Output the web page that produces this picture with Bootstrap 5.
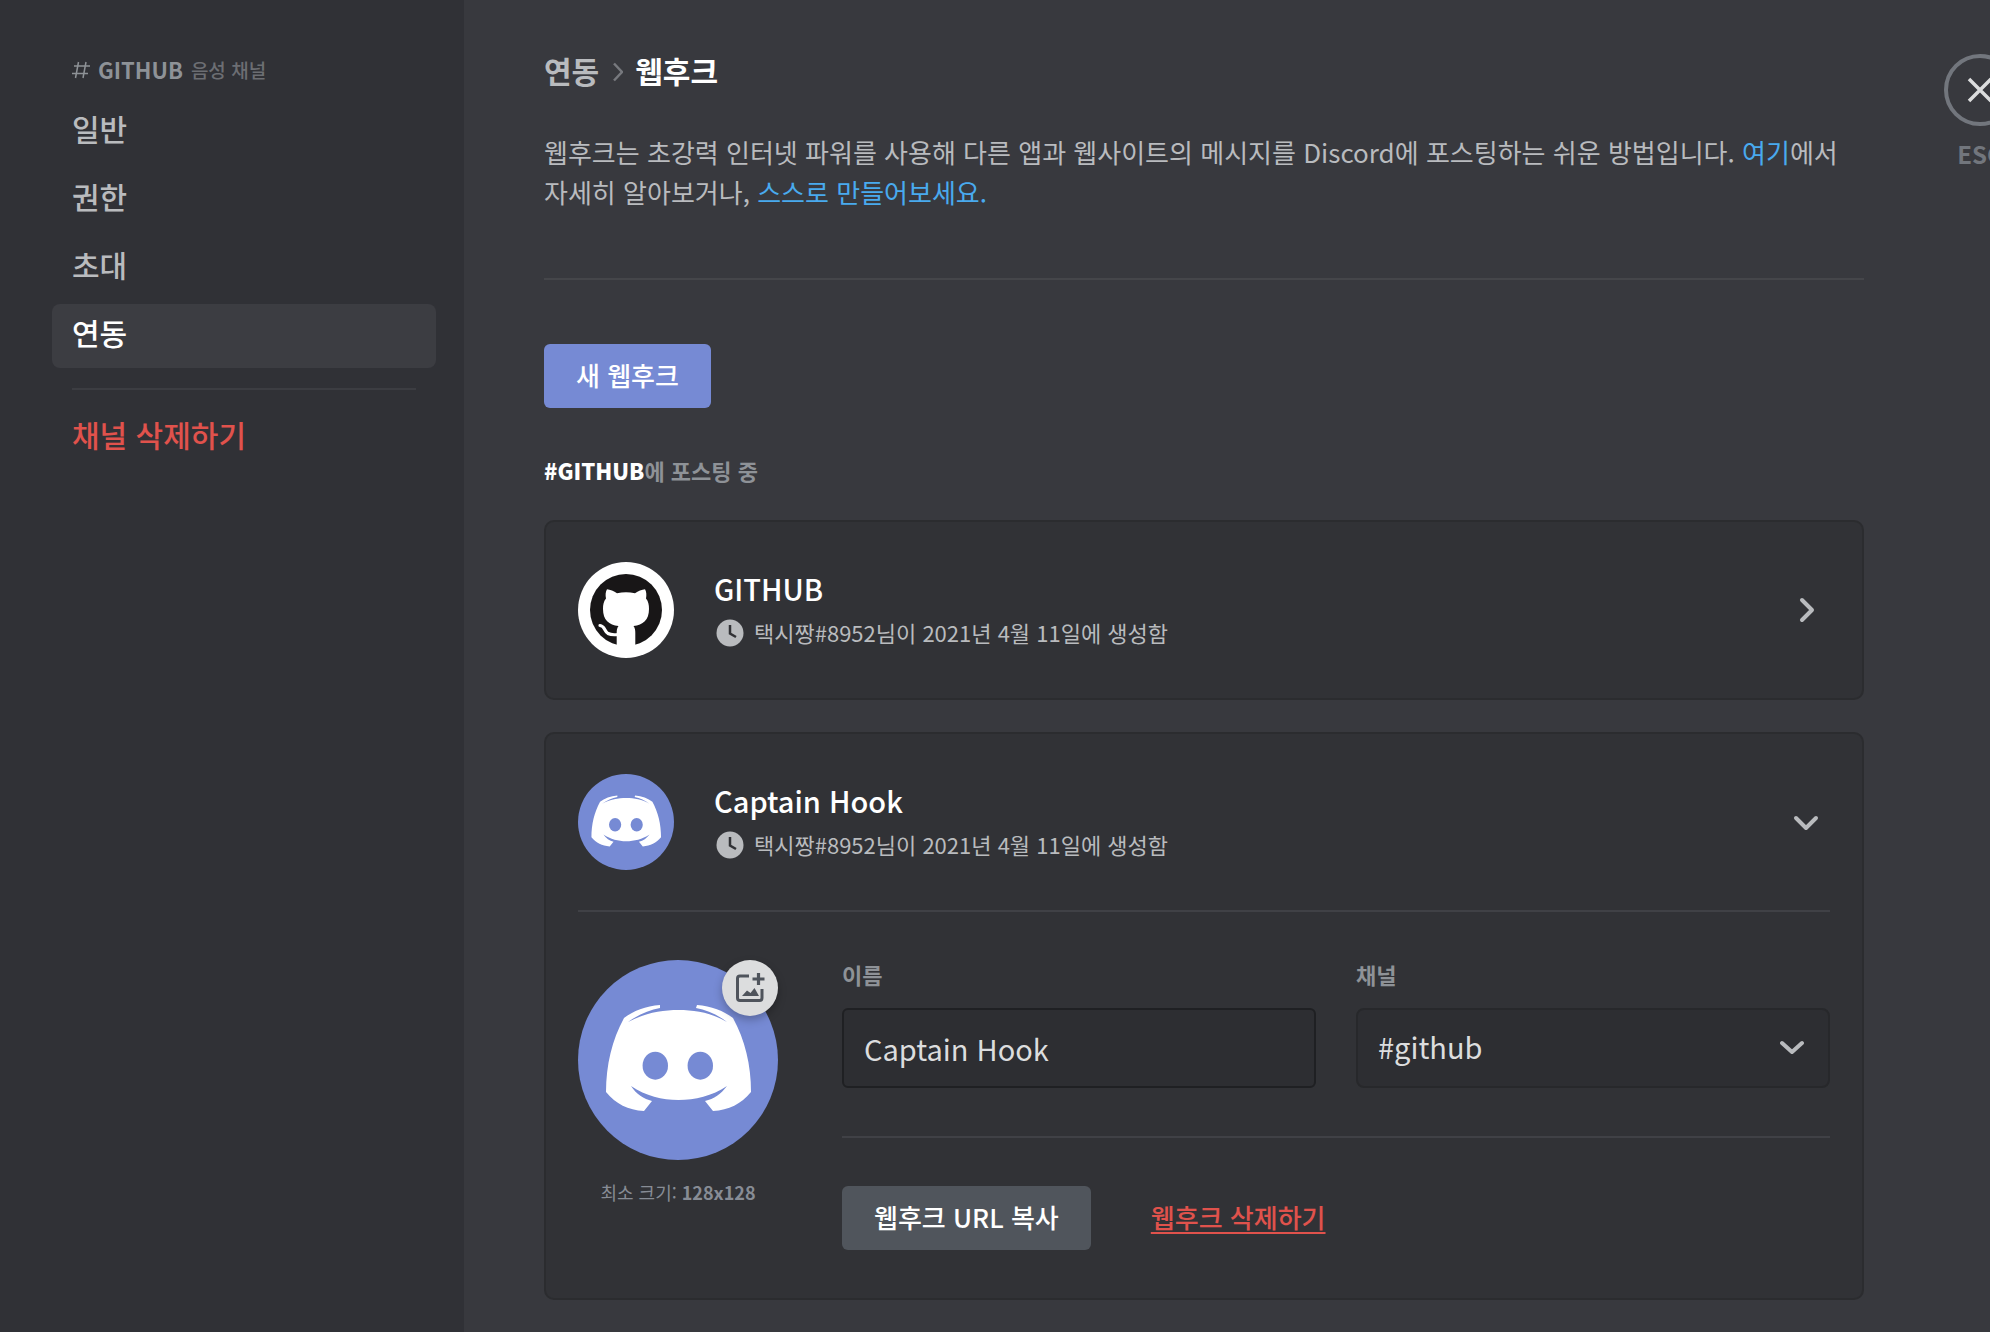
<!DOCTYPE html>
<html lang="ko">
<head>
<meta charset="utf-8">
<meta name="viewport" content="width=device-width, initial-scale=1">
<title>웹후크</title>
<link href="https://cdn.jsdelivr.net/npm/bootstrap@5.3.0/dist/css/bootstrap.min.css" rel="stylesheet">
<style>
:root { --side: #303136; --main: #38393e; --panel: #313236; --rule: #404146; --soft: #b9bbbe; --muted: #8e9297; --danger: #e0524c; }
body { background: var(--main); color: var(--soft); font-family: "Noto Sans CJK KR", "Noto Sans", sans-serif; font-size: 26px; line-height: 40px; overflow-x: hidden; }
button, input, select { font-family: inherit; }
.rule { height: 2px; margin: 0; border: 0; opacity: 1; background: var(--rule); }
.fw-mid { font-weight: 500; }

.side { width: 464px; background: var(--side); padding: 50px 28px 0 52px; }
.side-head { font-size: 22px; line-height: 40px; padding: 0 20px; margin-bottom: 10px; color: var(--muted); }
.side-head b { line-height: 38px; padding-bottom: 2px; }
.side-kind { font-size: 19px; color: #6c6e73; }
.side .nav { gap: 4px; }
.side .nav-link { height: 64px; padding: 8px 20px; line-height: 40px; font-size: 30px; font-weight: 500; color: var(--soft); border-radius: 8px; }
.side .nav-link.active { background: #3c3d42; color: #fff; }
.side .nav-link.gone { color: var(--danger); }
.side .rule { margin: 20px 20px 16px; background: #3c3d42; }

.settings { padding: 50px 0 32px 80px; gap: 80px; }
.trail { font-size: 30px; line-height: 40px; font-weight: 700; gap: 12px; margin: 0 0 42px; }
.trail a { color: var(--soft); }
.trail svg { margin: 4px 0 0 2px; }
.about a { color: #49aaee; text-decoration: none; }
.about { margin-bottom: 66px; }
.about + .rule { background: #45464a; }
.btn-tall { height: 64px; padding: 0 32px; border: 0; border-radius: 6px; font-size: 26px; line-height: 60px; font-weight: 500; color: #fff; }
.btn-tall span { display: block; padding-bottom: 2px; }
.btn-blurple { background: #768ad4; }
.btn-slate { background: #50555c; }
.posting { font-size: 22px; line-height: 32px; font-weight: 700; color: var(--muted); margin: 46px 0 34px; }

.hook { background: var(--panel); border: 2px solid #2b2c2f; border-radius: 10px; padding: 40px 32px; }
.hook + .hook { margin-top: 32px; }
.hook-top { gap: 40px; }
.hook-rule { margin-top: 40px; }
.hook h2 { font-size: 29px; line-height: 44px; font-weight: 500; color: #fff; margin: 0; }
.made { font-size: 22px; line-height: 44px; gap: 10px; }
.made svg { margin: 2px 0 0 2px; }
.fold { width: 48px; height: 48px; padding: 0; border: 0; background: none; color: var(--soft); }
.hook-body { gap: 64px; padding: 48px 0 8px; }
.picker { width: 200px; }
.pick-btn { width: 56px; height: 56px; padding: 0; border: 0; border-radius: 50%; background: #dcddde; color: #4f545c; box-shadow: 0 4px 8px rgba(0,0,0,.25); }
.hint { font-size: 18px; line-height: 32px; margin-top: 16px; color: #878c95; }
.fields { gap: 40px; }
.fields label { font-size: 22px; line-height: 28px; font-weight: 700; color: var(--muted); margin-bottom: 20px; }
.fields .form-control, .fields .form-select { height: 80px; padding: 0 20px; font-size: 29px; color: #dcddde; background: #2d2e32; border: 2px solid #1f2023; border-radius: 6px; }
.fields .form-control { line-height: 76px; }
.fields .form-select { line-height: 44px; padding-bottom: 4px; border-color: #27282b; border-radius: 8px; }
.caret { right: 26px; top: 28px; color: var(--soft); pointer-events: none; }
.remove { margin-left: 60px; padding-bottom: 2px; color: var(--danger); font-weight: 500; text-underline-offset: 4px; text-decoration-thickness: 2px; }
.remove:hover { color: var(--danger); }
.close-col { width: 46px; }
.close-btn { width: 72px; padding: 0; border: 0; background: none; color: #72767d; margin-top: 4px; font-size: 24px; line-height: 32px; font-weight: 700; }
.close-btn svg { margin-bottom: 12px; }
</style>
<script src="https://cdn.jsdelivr.net/npm/bootstrap@5.3.0/dist/js/bootstrap.bundle.min.js" defer></script>
</head>
<body>
<svg class="d-none" aria-hidden="true">
  <symbol id="clyde" viewBox="0 0 200 200">
    <circle cx="100" cy="100" r="100" fill="#768ad4"/>
    <path fill="#fff" d="M82 45C68 46 55 51 46 58C34 80 28 105 28 132C38 144 50 150 66 151L74 141C66 139 58 134 53 126C68 136 84 140 100.500 140C117 140 134 136 149 126C143 134 136 139 127 141L135 151C151 150 163 144 173 132C173 105 167 80 155 58C146 51 133 46 119 45L118 48C129 50 140 55 149 62C134 53 117 50 100.500 50C84 50 67 53 50 62C60 55 71 50 82 48Z"/>
    <ellipse cx="77.300" cy="105.700" rx="12.700" ry="14" fill="#768ad4"/>
    <ellipse cx="122.300" cy="105.700" rx="12.700" ry="14" fill="#768ad4"/>
  </symbol>
  <symbol id="clock" viewBox="0 0 28 28">
    <circle cx="14" cy="14" r="13.500" fill="#b9bbbe"/>
    <path d="M14 6v8.500l6 3.500" fill="none" stroke="#313236" stroke-width="2.500"/>
  </symbol>
</svg>
<div class="d-flex min-vh-100">
  <aside class="side flex-shrink-0">
    <div class="side-head d-flex align-items-center">
      <svg class="me-2" width="18" height="18" viewBox="0 0 18 18" fill="none" stroke="currentColor" stroke-width="1.500"><path d="M6.500 1l-3 16M14 1l-3 16M2 5h16M0 12.500h16"/></svg>
      <b>GITHUB</b><span class="side-kind fw-mid ms-2">음성 채널</span>
    </div>
    <nav class="nav flex-column">
      <a class="nav-link" href="#">일반</a>
      <a class="nav-link" href="#">권한</a>
      <a class="nav-link" href="#">초대</a>
      <a class="nav-link active" href="#" aria-current="page">연동</a>
    </nav>
    <hr class="rule">
    <nav class="nav flex-column"><a class="nav-link gone" href="#">채널 삭제하기</a></nav>
  </aside>

  <div class="settings d-flex flex-grow-1">
    <main class="flex-grow-1">
      <nav aria-label="breadcrumb">
        <div class="trail d-flex align-items-center">
          <a class="text-decoration-none" href="#">연동</a>
          <svg width="10" height="20" viewBox="0 0 10 20" fill="none" stroke="#77797e" stroke-width="2.500"><path d="M1 1.500L9 10l-8 8.500"/></svg>
          <span class="text-white" aria-current="page">웹후크</span>
        </div>
      </nav>
      <p class="about">웹후크는 초강력 인터넷 파워를 사용해 다른 앱과 웹사이트의 메시지를 Discord에 포스팅하는 쉬운 방법입니다. <a href="#">여기</a>에서 자세히 알아보거나, <a href="#">스스로 만들어보세요.</a></p>
      <hr class="rule mb-5">
      <button class="btn-tall btn-blurple mt-3" type="button"><span>새 웹후크</span></button>
      <p class="posting"><b class="text-white">#GITHUB</b>에 포스팅 중</p>

      <section class="hook">
        <div class="hook-top d-flex align-items-center">
          <svg width="96" height="96" viewBox="0 0 96 96" role="img" aria-label="GitHub">
            <circle cx="48" cy="48" r="48" fill="#fff"/>
            <circle cx="48" cy="48" r="36" fill="#181617"/>
            <path fill="#fff" d="M29 27.300C32 27.500 36 29 39 31.200C45 29.800 51 29.800 57 31.200C60 29 64 27.500 67 27.300C68.500 30 68.700 33 68 36.500C70.500 39.500 71 43 71 47C71 58 65 63 55.500 64C57 66 57.300 68 57.300 71V85H38.700V71C38.700 68 39 66 40.500 64C31 63 25 58 25 47C25 43 25.500 39.500 28 36.500C27.300 33 27.500 30 29 27.300Z"/>
            <path d="M22 63.500C27 64 26 69 30 71.500C33 73 36 73 40 72.500" fill="none" stroke="#fff" stroke-width="3.200" stroke-linecap="round"/>
          </svg>
          <div class="flex-grow-1">
            <h2>GITHUB</h2>
            <div class="made d-flex align-items-center"><svg width="28" height="28"><use href="#clock"/></svg><span>택시짱#8952님이 2021년 4월 11일에 생성함</span></div>
          </div>
          <button class="fold" type="button" aria-label="펼치기"><svg width="48" height="48" viewBox="0 0 48 48" fill="none" stroke="currentColor" stroke-width="4" stroke-linecap="round" stroke-linejoin="round"><path d="M20 14l10 10-10 10"/></svg></button>
        </div>
      </section>

      <section class="hook">
        <div class="hook-top d-flex align-items-center">
          <svg width="96" height="96" role="img" aria-label="Discord"><use href="#clyde"/></svg>
          <div class="flex-grow-1">
            <h2>Captain Hook</h2>
            <div class="made d-flex align-items-center"><svg width="28" height="28"><use href="#clock"/></svg><span>택시짱#8952님이 2021년 4월 11일에 생성함</span></div>
          </div>
          <button class="fold" type="button" aria-label="접기"><svg width="48" height="48" viewBox="0 0 48 48" fill="none" stroke="currentColor" stroke-width="4" stroke-linecap="round" stroke-linejoin="round"><path d="M14 20l10 10 10-10"/></svg></button>
        </div>
        <hr class="rule hook-rule">
        <div class="hook-body d-flex">
          <div class="picker flex-shrink-0 position-relative text-center">
            <svg class="d-block" width="200" height="200" role="img" aria-label="Captain Hook"><use href="#clyde"/></svg>
            <button class="pick-btn position-absolute top-0 end-0 d-flex align-items-center justify-content-center" type="button" aria-label="이미지 업로드">
              <svg width="32" height="32" viewBox="0 0 32 32"><path d="M15 4H6Q3.500 4 3.500 6.500V26Q3.500 28.500 6 28.500H25.500Q28 28.500 28 26V17" fill="none" stroke="currentColor" stroke-width="3"/><path d="M24.500 1v12M18.500 7h12" stroke="currentColor" stroke-width="3.200"/><path d="M8 24l5-5.500 3.500 2.500 4-5L25 24z" fill="currentColor"/></svg>
            </button>
            <div class="hint">최소 크기: <b>128x128</b></div>
          </div>
          <div class="flex-grow-1">
            <form class="fields d-flex">
              <div class="w-50">
                <label class="d-block" for="hook-name">이름</label>
                <input class="form-control" id="hook-name" type="text" value="Captain Hook">
              </div>
              <div class="w-50">
                <label class="d-block" for="hook-channel">채널</label>
                <div class="position-relative">
                  <select class="form-select" id="hook-channel"><option>#github</option></select>
                  <svg class="caret position-absolute" width="24" height="24" viewBox="0 0 24 24" fill="none" stroke="currentColor" stroke-width="4" stroke-linecap="round" stroke-linejoin="round"><path d="M2 7l10 9 10-9"/></svg>
                </div>
              </div>
            </form>
            <hr class="rule my-5">
            <div class="d-flex align-items-center">
              <button class="btn-tall btn-slate" type="button"><span>웹후크 URL 복사</span></button>
              <a class="remove" href="#">웹후크 삭제하기</a>
            </div>
          </div>
        </div>
      </section>
    </main>
    <div class="close-col flex-shrink-0">
      <button class="close-btn" type="button">
        <svg class="d-block" width="72" height="72" viewBox="0 0 72 72" fill="none"><circle cx="36" cy="36" r="34" stroke="currentColor" stroke-width="4"/><path d="M25 25l22 22M47 25L25 47" stroke="#dcddde" stroke-width="3.500"/></svg>
        ESC
      </button>
    </div>
  </div>
</div>
</body>
</html>
